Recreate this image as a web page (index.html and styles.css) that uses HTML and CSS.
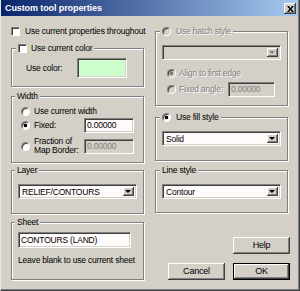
FILE: index.html
```html
<!DOCTYPE html>
<html>
<head>
<meta charset="utf-8">
<link rel="stylesheet" href="styles.css">
</head>
<body>
<div class="window">
  <div class="titlebar">
    <span class="title">Custom tool properties</span>
    <span class="close"><svg width="7" height="6" viewBox="0 0 7 6"><path d="M0 0h2l1.5 2 1.5-2h2l-2.5 3 2.5 3h-2l-1.5-2-1.5 2h-2l2.5-3z" fill="#000"/></svg></span>
  </div>
  <div class="body">
    <div class="col">
      <div class="check-row top-check"><span class="checkbox"></span><span>Use current properties throughout</span></div>

      <div class="group g-color">
        <div class="gtitle chk"><span class="checkbox"></span><span>Use current color</span></div>
        <div class="color-row"><span>Use color:</span><span class="swatch"></span></div>
      </div>

      <div class="group g-width">
        <div class="gtitle">Width</div>
        <div class="opt-row r1"><span class="radio"></span><span>Use current width</span></div>
        <div class="opt-row r2"><span class="radio checked"></span><span>Fixed:</span><span class="input">0.00000</span></div>
        <div class="opt-row r3"><span class="radio"></span><span class="two-line">Fraction of<br>Map Border:</span><span class="input disabled">0.00000</span></div>
      </div>

      <div class="group g-layer">
        <div class="gtitle">Layer</div>
        <div class="combo"><span class="ctext">RELIEF/CONTOURS</span><span class="cbtn"><i></i></span></div>
      </div>

      <div class="group g-sheet">
        <div class="gtitle">Sheet</div>
        <div class="input sheet-input">CONTOURS (LAND)</div>
        <div class="hint">Leave blank to use current sheet</div>
      </div>
    </div>

    <div class="col">
      <div class="group g-hatch">
        <div class="gtitle rt dim"><span class="radio disabled"></span><span>Use hatch style</span></div>
        <div class="combo disabled"><span class="ctext"></span><span class="cbtn"><i></i></span></div>
        <div class="opt-row h1 dim"><span class="radio disabled checked"></span><span>Align to first edge</span></div>
        <div class="opt-row h2 dim"><span class="radio disabled"></span><span>Fixed angle:</span><span class="input disabled">0.00000</span></div>
      </div>

      <div class="group g-fill">
        <div class="gtitle rt"><span class="radio checked"></span><span>Use fill style</span></div>
        <div class="combo"><span class="ctext">Solid</span><span class="cbtn"><i></i></span></div>
      </div>

      <div class="group g-line">
        <div class="gtitle rt">Line style</div>
        <div class="combo"><span class="ctext">Contour</span><span class="cbtn"><i></i></span></div>
      </div>

      <div class="btn-row help-row"><span class="btn">Help</span></div>
      <div class="btn-row action-row"><span class="btn">Cancel</span><span class="btn default">OK</span></div>
    </div>
  </div>
</div>
</body>
</html>
```

FILE: styles.css
```css
* { box-sizing: border-box; }
html, body { margin: 0; padding: 0; background: #d4d0c8; }
body {
  font-family: "Liberation Sans", Arial, sans-serif;
  font-size: 8.5px;
  letter-spacing: -0.2px;
  color: #000;
  line-height: 11px;
  white-space: nowrap;
}
.window {
  width: 300px;
  height: 291px;
  background: #d4d0c8;
  border-left: 1px solid #e8e6e0;
  border-right: 1px solid #404040;
  border-bottom: 1px solid #404040;
  box-shadow: inset -1px -1px 0 #808080;
  overflow: hidden;
}
.titlebar {
  height: 16px;
  margin-right: 1px;
  background: linear-gradient(to right, #0a246a, #a6caf0);
  display: flex;
  align-items: flex-start;
  justify-content: space-between;
}
.title {
  color: #fff;
  font-weight: bold;
  font-size: 9px;
  letter-spacing: -0.1px;
  line-height: 16px;
  padding-left: 4px;
}
.close {
  width: 12px;
  height: 11px;
  margin-top: 3px;
  margin-right: 2px;
  background: #d4d0c8;
  box-shadow: inset -1px -1px 0 #404040, inset 1px 1px 0 #fff, inset -2px -2px 0 #808080;
  display: flex;
  align-items: center;
  justify-content: center;
}
.body {
  display: grid;
  grid-template-columns: 133px 135px;
  column-gap: 11px;
  padding-left: 10px;
  align-items: start;
}
.col { display: flex; flex-direction: column; align-items: flex-start; min-width: 0; }

.check-row { display: flex; align-items: center; gap: 5px; height: 12px; }
.top-check { margin-top: 9px; }
.checkbox {
  width: 9px; height: 9px; flex: none;
  background: #fff;
  border: 1px solid; border-color: #808080 #fff #fff #808080;
  box-shadow: inset 1px 1px 0 #404040;
}
.radio {
  width: 9px; height: 9px; flex: none;
  border-radius: 50%;
  background: #fff;
  border: 1px solid; border-color: #808080 #fff #fff #808080;
  box-shadow: inset 1px 1px 0 #404040;
}
.radio.checked { background: radial-gradient(circle, #000 0 1.6px, #fff 2.1px); }
.radio.disabled { background: #d4d0c8; }
.radio.disabled.checked { background: radial-gradient(circle, #808080 0 1.6px, #d4d0c8 2.1px); }

.group {
  width: 133px;
  border: 1px solid #808080;
  box-shadow: 1px 1px 0 #fff, inset 1px 1px 0 #fff;
}
.gtitle {
  display: flex;
  align-items: center;
  gap: 4px;
  width: max-content;
  height: 12px;
  line-height: 12px;
  margin-top: -7px;
  margin-left: 3px;
  padding: 0 2px;
  background: #d4d0c8;
}
.gtitle.chk { margin-left: 4px; }
.gtitle.rt { margin-left: 4px; gap: 5px; }
.dim { color: #808080; text-shadow: 1px 1px 0 #fff; }

.g-color { margin-top: 11px; height: 39px; }
.color-row {
  display: grid;
  grid-template-columns: 51px 50px;
  align-items: center;
  padding-left: 14px;
  margin-top: 4px;
}
.swatch {
  height: 20px;
  background: #ccffcc;
  border: 1px solid; border-color: #808080 #fff #fff #808080;
  box-shadow: inset 1px 1px 0 #404040, inset -1px -1px 0 #d4d0c8;
}

.g-width { margin-top: 9px; height: 67px; }
.opt-row {
  display: grid;
  grid-template-columns: 9px 1fr 50px;
  column-gap: 4px;
  align-items: center;
  width: 100%;
  padding: 0 9px;
}
.r1 { margin-top: 4px; height: 11px; }
.r2 { margin-top: 1px; height: 15px; }
.r3 { margin-top: 4px; height: 18px; }
.two-line { line-height: 9px; }

.input {
  height: 15px;
  background: #fffafa;
  border: 1px solid; border-color: #808080 #fff #fff #808080;
  box-shadow: inset 1px 1px 0 #404040, inset -1px -1px 0 #d4d0c8;
  padding-left: 2px;
  line-height: 13px;
}
.input.disabled { background: #d4d0c8; color: #808080; }

.g-layer { margin-top: 7px; height: 44px; }
.combo {
  width: 119px;
  height: 15px;
  margin-top: 8px;
  margin-left: 6px;
  display: flex;
  align-items: stretch;
  padding: 2px;
  background: #fffafa;
  border: 1px solid; border-color: #808080 #fff #fff #808080;
  box-shadow: inset 1px 1px 0 #404040, inset -1px -1px 0 #d4d0c8;
}
.combo.disabled { background: #d4d0c8; }
.ctext { flex: 1; line-height: 11px; padding-left: 1px; overflow: hidden; }
.cbtn {
  width: 11px;
  background: #d4d0c8;
  box-shadow: inset -1px -1px 0 #404040, inset 1px 1px 0 #fff, inset -2px -2px 0 #808080;
  display: flex; align-items: center; justify-content: center;
}
.cbtn i {
  width: 0; height: 0;
  border-left: 3px solid transparent;
  border-right: 3px solid transparent;
  border-top: 3px solid #000;
  margin-top: -1px;
  margin-left: -1px;
}
.combo.disabled .cbtn i { border-top-color: #808080; }

.g-sheet { margin-top: 8px; height: 58px; }
.sheet-input { width: 113px; height: 16px; margin-top: 4px; margin-left: 6px; line-height: 14px; }
.hint { margin-top: 7px; margin-left: 6px; }

.g-hatch { margin-top: 15px; height: 75px; }
.h1 { margin-top: 8px; height: 11px; grid-template-columns: 9px 1fr 47px; column-gap: 3px; padding: 0 12px 0 11px; }
.h2 { margin-top: 3px; height: 15px; grid-template-columns: 9px 1fr 47px; column-gap: 3px; padding: 0 12px 0 11px; }
.h2 .input { text-shadow: none; }
.g-fill { margin-top: 11px; height: 44px; }
.g-line { margin-top: 9px; height: 43px; }

.btn-row { display: flex; justify-content: flex-end; gap: 8px; width: 100%; }
.help-row { margin-top: 24px; }
.action-row { margin-top: 9px; }
.btn {
  width: 57px;
  height: 17px;
  background: #d4d0c8;
  box-shadow: inset -1px -1px 0 #404040, inset 1px 1px 0 #fff, inset -2px -2px 0 #808080;
  display: flex; align-items: center; justify-content: center;
  font-size: 9px;
}
.btn.default {
  border: 1px solid #000;
}
```
